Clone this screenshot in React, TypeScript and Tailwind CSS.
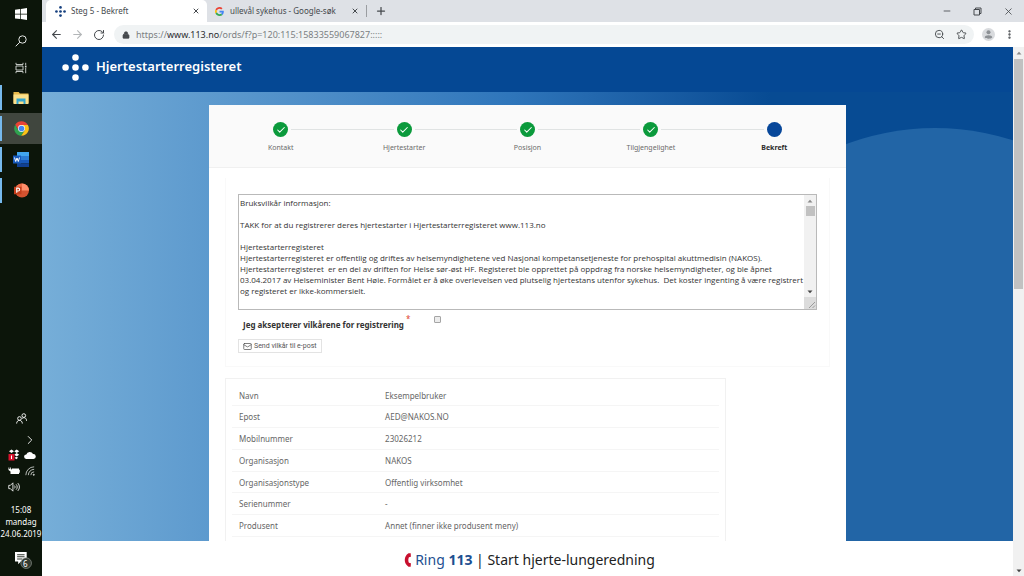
import { useState } from "react";
import type { ReactNode } from "react";
import {
  ArrowLeft,
  ArrowRight,
  Check,
  ChevronRight,
  Lock,
  Mail,
  Minus,
  MoreVertical,
  Plus,
  RotateCw,
  Star,
  X,
  ZoomOut,
} from "lucide-react";

const steps = [
  { label: "Kontakt", done: true },
  { label: "Hjertestarter", done: true },
  { label: "Posisjon", done: true },
  { label: "Tilgjengelighet", done: true },
  { label: "Bekreft", done: false },
];

const details = [
  { label: "Navn", value: "Eksempelbruker" },
  { label: "Epost", value: "AED@NAKOS.NO" },
  { label: "Mobilnummer", value: "23026212" },
  { label: "Organisasjon", value: "NAKOS" },
  { label: "Organisasjonstype", value: "Offentlig virksomhet" },
  { label: "Serienummer", value: "-" },
  { label: "Produsent", value: "Annet (finner ikke produsent meny)" },
];

const terms = `Bruksvilkår informasjon:

TAKK for at du registrerer deres hjertestarter i Hjertestarterregisteret www.113.no

Hjertestarterregisteret
Hjertestarterregisteret er offentlig og driftes av helsemyndighetene ved Nasjonal kompetansetjeneste for prehospital akuttmedisin (NAKOS).
Hjertestarterregisteret  er en del av driften for Helse sør-øst HF. Registeret ble opprettet på oppdrag fra norske helsemyndigheter, og ble åpnet
03.04.2017 av Helseminister Bent Høie. Formålet er å øke overlevelsen ved plutselig hjertestans utenfor sykehus.  Det koster ingenting å være registrert
og registeret er ikke-kommersielt.`;

function DotsLogo({ className, color }: { className: string; color: string }) {
  return (
    <svg viewBox="0 0 28 28" className={className} fill={color}>
      <circle cx="14" cy="3.7" r="3.4" />
      <circle cx="3.7" cy="14" r="3.4" />
      <circle cx="14" cy="14" r="3.4" />
      <circle cx="24.3" cy="14" r="3.4" />
      <circle cx="14" cy="24.3" r="3.4" />
    </svg>
  );
}

function GoogleLogo() {
  return (
    <svg viewBox="0 0 48 48" className="size-[9px] shrink-0">
      <path fill="#ea4335" d="M24 9.500c3.500 0 6.700 1.200 9.200 3.600l6.900-6.900C35.900 2.400 30.500 0 24 0 14.600 0 6.500 5.400 2.600 13.200l8 6.200C12.400 13.700 17.700 9.500 24 9.500z" />
      <path fill="#4285f4" d="M47 24.500c0-1.600-.2-3.100-.4-4.500H24v9h12.900c-.6 3-2.300 5.500-4.800 7.200l7.700 6C44.400 38 47 31.800 47 24.500z" />
      <path fill="#fbbc05" d="M10.500 28.600c-.5-1.500-.8-3-.8-4.600s.3-3.100.8-4.600l-8-6.200C.9 16.500 0 20.100 0 24s.9 7.500 2.600 10.800z" />
      <path fill="#34a853" d="M24 48c6.500 0 11.900-2.100 15.900-5.800l-7.700-6c-2.200 1.500-4.900 2.300-8.200 2.300-6.300 0-11.600-4.200-13.500-9.900l-8 6.200C6.500 42.600 14.600 48 24 48z" />
    </svg>
  );
}

function TaskButton({ label, active, children }: { label: string; active?: boolean; children: ReactNode }) {
  return (
    <button
      aria-label={label}
      className={`flex h-[31px] w-full items-center ${active ? "bg-[#40463e]" : ""}`}
    >
      <span className="h-[25px] w-[2px] bg-[#76b9ed]" />
      <span className="flex flex-1 justify-center pr-[2px]">{children}</span>
    </button>
  );
}

function Taskbar() {
  return (
    <aside className="flex w-[42px] shrink-0 flex-col bg-[#0c150a] pb-px text-white">
      <button aria-label="Start" className="flex h-[27px] items-center justify-center">
        <svg viewBox="0 0 12 12" className="size-[12px]" fill="#fff">
          <path d="M0 1.700 5.200 1v4.700H0zM5.900.9 12 0v5.700H5.900zM0 6.400h5.200v4.700L0 10.400zM5.900 6.400H12V12l-6.100-.9z" />
        </svg>
      </button>
      <button aria-label="Søk" className="flex h-[27px] items-center justify-center">
        <svg viewBox="0 0 12 12" className="size-[12px]" fill="none" stroke="#e5e7e5">
          <circle cx="7.500" cy="4.500" r="3.700" />
          <path d="M4.800 7.200.7 11.300" />
        </svg>
      </button>
      <button aria-label="Oppgavevisning" className="flex h-[27px] items-center justify-center">
        <svg viewBox="0 0 12 12" className="size-[12px]" fill="none" stroke="#d5d8d5" strokeWidth=".9">
          <path d="M1 .8v1.700h7V.8M1 11.200V9.500h7v1.700M1 4h7v4H1zM10.700.8v2.500M10.700 6v5.200" />
          <path d="M10.700 3.700v1.800" strokeWidth="1.600" />
        </svg>
      </button>
      <div className="mt-px">
        <TaskButton label="Filutforsker">
          <svg viewBox="0 0 16 14" className="h-[14px] w-[16px]">
            <path fill="#e9b94b" d="M.5 1h5.200l1.200 1.500h8.600V12H.5z" />
            <path fill="#fbe08c" d="M.5 3.500h15V13H.5z" />
            <path fill="#35a6cf" d="M3.500 7.500h9V13H10.500v-2.500h-5V13h-2z" />
          </svg>
        </TaskButton>
        <TaskButton label="Google Chrome" active>
          <svg viewBox="0 0 16 16" className="size-[15px]">
            <path fill="#e94335" d="M1.300 4A7.800 7.800 0 0 1 14.800 4.200H8L4.700 10z" />
            <path fill="#2fa24f" d="M1.300 4A7.800 7.800 0 0 0 7.700 15.800L11.300 10H4.700z" />
            <path fill="#fbc116" d="M14.800 4.200A7.800 7.800 0 0 1 7.700 15.800L11.400 10 8 4.200z" />
            <circle cx="8" cy="8" r="3.700" fill="#fff" />
            <circle cx="8" cy="8" r="3" fill="#4587f0" />
          </svg>
        </TaskButton>
        <TaskButton label="Word">
          <svg viewBox="0 0 16 15" className="h-[15px] w-[16px]">
            <path fill="#41a5ee" d="M4 0h12v4H4z" />
            <path fill="#2b7cd3" d="M4 4h12v4H4z" />
            <path fill="#185abd" d="M4 8h12v3.500H4z" />
            <path fill="#103f91" d="M4 11.500h12V15H4z" />
            <path fill="#185abd" d="M0 3.500h8v8H0z" />
            <path stroke="#fff" fill="none" d="m1.500 5.500 1.200 4L4 6l1.300 3.500 1.200-4" />
          </svg>
        </TaskButton>
        <TaskButton label="PowerPoint">
          <svg viewBox="0 0 16 16" className="size-[15px]">
            <circle cx="8.500" cy="8" r="7.500" fill="#d35230" />
            <path fill="#ff8f6b" d="M8.500.5A7.500 7.500 0 0 1 16 8H8.500z" />
            <path fill="#ed6c47" d="M8.500.5A7.500 7.500 0 0 0 1 8h7.500z" />
            <path fill="#c43e1c" d="M0 4h8v8H0z" />
            <path stroke="#fff" fill="none" strokeWidth="1.200" d="M2.900 10.500v-5h1.600a1.500 1.500 0 0 1 0 3H2.900" />
          </svg>
        </TaskButton>
      </div>

      {/* TRAY */}
      <div className="mt-auto flex flex-col">
        <button aria-label="Personer" className="flex h-[30px] items-center justify-center">
          <svg viewBox="0 0 12 12" className="size-[11px]" fill="none" stroke="#fff">
            <circle cx="8.500" cy="2.800" r="2" />
            <circle cx="3.800" cy="6" r="2" />
            <path d="M.7 11.500c0-4.600 6.200-4.600 6.200 0M6.500 6.200c1.800-2 5-1.200 5 2.300" />
          </svg>
        </button>
        <button aria-label="Vis skjulte ikoner" className="flex h-[14px] items-center justify-end pr-[5px]">
          <ChevronRight size={14} strokeWidth={1.5} />
        </button>
        <div className="grid grid-cols-2 justify-items-center pr-1 pl-[6px]">
          <span className="flex h-4 items-center">
            <svg viewBox="0 0 12 12" className="size-[12px]">
              <path fill="#fff" d="m3.500.5 2.500 1.700L3.500 4 1 2.200zM8.700.5l2.500 1.700L8.700 4 6.200 2.200zM8.700 4l2.500 1.800-2.500 1.700-2.500-1.700zM6.500 8.500l2.200-.5 1.500.8-2 1.400z" />
              <path fill="#d8112b" d="M.5 5h6v6.500h-6z" />
              <path stroke="#fff" d="M3.500 6.500V10" />
            </svg>
          </span>
          <span className="flex h-4 items-center">
            <svg viewBox="0 0 12 8" className="h-[8px] w-[12px]" fill="#fff">
              <path d="M2.500 8a2.300 2.300 0 0 1-.2-4.600A3.600 3.600 0 0 1 9 3a2.500 2.500 0 0 1 .5 5z" />
            </svg>
          </span>
          <span className="flex h-4 items-center">
            <svg viewBox="0 0 12 8" className="h-[8px] w-[12px]" fill="#fff">
              <path d="M4 1.500h7v1.200h.8v3H11V7H2.500V4.500L.5 3V.5h.8V2h.9V.5H3V3z" />
            </svg>
          </span>
          <span className="flex h-4 items-center">
            <svg viewBox="0 0 12 12" className="size-[10px]" fill="none" stroke="#d4d7d4">
              <path d="M1 11A10 10 0 0 1 11 1M4 11a7 7 0 0 1 7-7M7 11a4 4 0 0 1 4-4" />
              <circle cx="10.500" cy="10.500" r=".7" fill="#fff" />
            </svg>
          </span>
          <span className="flex h-4 items-center">
            <svg viewBox="0 0 14 12" className="h-[10px] w-[12px]" fill="none" stroke="#fff">
              <path d="M.7 4h2l3-3v10l-3-3h-2zM7.500 4.300c1 1 1 2.400 0 3.400M9.500 2.800c1.800 1.900 1.800 4.500 0 6.400M11.500 1.300c2.600 2.800 2.600 6.600 0 9.400" />
            </svg>
          </span>
        </div>
        <div className="mt-[9px] text-center text-[8px] leading-[12px]">
          <p>15:08</p>
          <p>mandag</p>
          <p>24.06.2019</p>
        </div>
        <button aria-label="Varslinger, 6 nye" className="mt-[5px] flex h-[30px] items-center justify-center pl-[4px]">
          <span className="relative">
            <svg viewBox="0 0 16 16" className="size-[17px]">
              <path fill="#fff" d="M0 0h11v9H5.500L3 11.500V9H0z" />
              <path stroke="#333a31" d="M2 2.500h7M2 4.500h7M2 6.500h5" />
              <circle cx="10.500" cy="10.500" r="5" fill="#333a31" stroke="#9aa09a" strokeWidth=".6" />
            </svg>
            <span className="absolute right-[4px] bottom-[1px] text-[8px] leading-[9px]">6</span>
          </span>
        </button>
      </div>
    </aside>
  );
}

function BrowserBar() {
  return (
    <div className="shrink-0 text-[#45494d]">
      {/* TABS */}
      <div className="flex h-[22px] items-center bg-[#dee1e6] pl-1 text-[8px]">
        <div className="flex h-full w-[161px] items-center rounded-t-[5px] bg-white pr-[7px] pl-[9px]">
          <DotsLogo className="mr-[5px] size-[11px]" color="#16407f" />
          <span className="flex-1">Steg 5 - Bekreft</span>
          <button aria-label="Lukk Steg 5 - Bekreft">
            <X size={8} strokeWidth={3} />
          </button>
        </div>
        <div className="flex h-full w-[159px] items-center pr-[7px] pl-[8px]">
          <GoogleLogo />
          <span className="ml-[6px] flex-1">ullevål sykehus - Google-søk</span>
          <button aria-label="Lukk ullevål sykehus - Google-søk">
            <X size={8} strokeWidth={3} />
          </button>
        </div>
        <span className="h-3 w-px bg-[#9a9da1]" />
        <button aria-label="Ny fane" className="ml-2">
          <Plus size={12} strokeWidth={2.5} />
        </button>
        <div className="ml-auto flex items-center gap-[21px] pr-[10px]">
          <button aria-label="Minimer">
            <Minus size={10} />
          </button>
          <button aria-label="Gjenopprett">
            <svg viewBox="0 0 9 9" className="size-[9px]" fill="none" stroke="currentColor">
              <path d="M1 2.500h5.500V8H1zM2.500 2.500V1H8v5.500H6.500" />
            </svg>
          </button>
          <button aria-label="Lukk vindu">
            <X size={11} strokeWidth={1.8} />
          </button>
        </div>
      </div>

      {/* ADDRESS */}
      <div className="flex h-[25px] items-center bg-white pr-[9px] pl-2">
        <button aria-label="Tilbake">
          <ArrowLeft size={13} />
        </button>
        <button aria-label="Frem" className="ml-2 text-[#b3b6b8]">
          <ArrowRight size={13} />
        </button>
        <button aria-label="Last inn på nytt" className="ml-[9px]">
          <RotateCw size={12} />
        </button>
        <div className="ml-[9px] flex h-[19px] flex-1 items-center rounded-full bg-[#f0f3f4] pr-[7px] pl-[8px]">
          <Lock size={8} fill="currentColor" className="shrink-0" />
          <div className="relative ml-[6px] flex-1 text-[9px] text-[#7b7f83]">
            <p aria-hidden="true">
              https://<span className="text-[#2a2d30]">www.113.no</span>/ords/f?p=120:115:15833559067827:::::
            </p>
            {/* the paragraph above does the two-tone colouring */}
            <input
              aria-label="Adresse"
              defaultValue="https://www.113.no/ords/f?p=120:115:15833559067827:::::"
              className="absolute inset-0 w-full bg-transparent text-transparent outline-none"
            />
          </div>
          <button aria-label="Zoom">
            <ZoomOut size={11} />
          </button>
          <button aria-label="Bokmerk" className="ml-[11px]">
            <Star size={11} />
          </button>
        </div>
        <button aria-label="Profil" className="ml-2">
          <svg viewBox="0 0 13 13" className="size-[13px]">
            <circle cx="6.500" cy="6.500" r="6.500" fill="#d9dbde" />
            <circle cx="6.500" cy="4.300" r="2" fill="#8d9195" />
            <path fill="#8d9195" d="M2.700 9.500c0-3 7.600-3 7.600 0-1.800 1.600-5.800 1.600-7.600 0z" />
          </svg>
        </button>
        <button aria-label="Meny" className="ml-[9px]">
          <MoreVertical size={11} strokeWidth={3} />
        </button>
      </div>
    </div>
  );
}

function Stepper() {
  return (
    <ol className="flex border-b border-[#f0f0f0] bg-[#fafafa] px-[10px] pt-[17px] pb-[14px]">
      {steps.map((step, i) => (
        <li key={step.label} className="flex flex-1 flex-col items-center">
          <div className="flex w-full items-center gap-[3px]">
            <span className={`h-px flex-1 ${i > 0 ? "bg-[#e0e3e3]" : ""}`} />
            <span
              className={`flex size-[15px] items-center justify-center rounded-full text-white ${step.done ? "bg-[#0b9a3c]" : "bg-[#07479a]"}`}
            >
              {step.done && <Check size={10} strokeWidth={2.5} />}
            </span>
            <span className={`h-px flex-1 ${i < steps.length - 1 ? "bg-[#e0e3e3]" : ""}`} />
          </div>
          <span className={`mt-[6px] text-[7px] leading-[10px] ${step.done ? "text-[#6b6b6b]" : "font-bold text-[#2b2b2b]"}`}>
            {step.label}
          </span>
        </li>
      ))}
    </ol>
  );
}

function Arrow({ up, color }: { up?: boolean; color: string }) {
  return (
    <svg viewBox="0 0 6 4" className="h-[4px] w-[6px]" fill={color}>
      <path d={up ? "M.5 3.500 3 .8l2.500 2.700z" : "M.5.5 3 3.200 5.500.5z"} />
    </svg>
  );
}

function Terms() {
  const [accepted, setAccepted] = useState(false);

  return (
    <section className="mx-4 mt-[10px] border-x border-b border-[#f9f9f9] px-3 pt-4 pb-[13px]">
      <div className="flex h-[116px] border border-[#b9b9b9] bg-white">
        <textarea
          aria-label="Bruksvilkår"
          readOnly
          wrap="off"
          value={terms}
          className="min-w-0 flex-1 resize-none overflow-hidden pt-[2px] pl-px font-['Open_Sans',sans-serif] text-[8px] leading-[11px] text-[#333] outline-none"
        />
        <div className="flex w-[12px] flex-col items-center bg-[#f1f1f1]">
          <span className="flex h-[11px] items-center">
            <Arrow up color="#8a8a8a" />
          </span>
          <span className="h-[10px] w-[9px] bg-[#c1c1c1]" />
          <span className="mt-auto flex h-[11px] items-center">
            <Arrow color="#444" />
          </span>
          <span className="flex h-[12px] w-full items-end justify-end bg-[#dcdcdc]">
            <svg viewBox="0 0 8 8" className="size-[8px]" stroke="#8a8a8a" strokeWidth=".8">
              <path d="M1 7 7 1M4.500 7 7 4.500" />
            </svg>
          </span>
        </div>
      </div>
      <div className="flex h-[29px] items-start pl-[5px]">
        <label htmlFor="accept" className="pt-[9px] text-[8px] leading-[12px] font-bold text-[#333]">
          Jeg aksepterer vilkårene for registrering
        </label>
        <span className="mt-[3px] ml-[2px] text-[8px] leading-[12px] text-[#e0452f]">*</span>
        <input
          id="accept"
          type="checkbox"
          checked={accepted}
          onChange={(e) => setAccepted(e.target.checked)}
          className="mt-[6px] ml-6 size-[7px] appearance-none rounded-[1px] border border-[#a5a5a5] bg-[#ececec] checked:bg-[#07479a]"
        />
      </div>
      <button className="flex h-[14px] items-center gap-[2px] border border-[#e3e3e3] px-1 font-['Roboto',sans-serif] text-[7px] text-[#555]">
        <Mail size={9} />
        Send vilkår til e-post
      </button>
    </section>
  );
}

function Details() {
  return (
    <section className="mt-[11px] mr-[120px] ml-4 border border-[#f1f1f1] px-[6px] pt-[6px] pb-4">
      <table className="h-[152px] w-full text-[8px] leading-[11px] text-[#666]">
        <tbody>
          {details.map((row) => (
            <tr key={row.label} className="border-b border-[#f5f5f5]">
              <th className="w-[30%] pl-[7px] text-left font-normal">{row.label}</th>
              <td className="pl-[7px]">{row.value}</td>
            </tr>
          ))}
        </tbody>
      </table>
    </section>
  );
}

export default function App() {
  return (
    <div className="flex h-screen overflow-hidden font-['Noto_Sans','Open_Sans',sans-serif]">
      <Taskbar />
      <div className="flex min-w-0 flex-1 flex-col">
        <BrowserBar />
        <div className="flex min-h-0 flex-1">
          <div className="flex min-w-0 flex-1 flex-col">
            <header className="flex h-[45px] shrink-0 items-center gap-[7px] bg-[#054894] pb-1 pl-5 text-white">
              <DotsLogo className="size-[27px]" color="#fff" />
              <h1 className="pb-[3px] text-[13px] leading-[18px] font-semibold">Hjertestarterregisteret</h1>
            </header>

            <main className="relative flex min-h-0 flex-1 justify-center overflow-hidden bg-linear-to-r from-[#76aed8] via-[#2f76bb] via-48% to-[#074b93] to-75% pt-[13px]">
              <div className="absolute top-[36px] right-[-177px] size-[510px] rounded-full bg-[#2265a6]" />
              <div className="relative h-[600px] w-full max-w-[637px] rounded-t-[2px] bg-white">
                <Stepper />
                <Terms />
                <Details />
              </div>
            </main>

            <footer className="flex h-[35px] shrink-0 items-center justify-center gap-1 bg-white pt-[2px] pl-1 text-[14px] text-[#222]">
              <svg viewBox="0 0 7 14" className="h-[14px] w-[7px]" fill="#c8102e">
                <path d="M4.500.3 6.700.2l.2 3.500-2 .5c-.8 1.900-.8 3.700 0 5.600l2 .5-.2 3.500-2.200-.1C-.5 10.500-.5 3.500 4.500.3z" />
              </svg>
              <p>
                <a href="tel:113" className="text-[#1d4f91]">
                  Ring <b>113</b>
                </a>{" "}
                | Start hjerte-lungeredning
              </p>
            </footer>
          </div>

          {/* PAGE SCROLLBAR */}
          <div className="flex w-[11px] shrink-0 flex-col items-center bg-[#f1f1f1]">
            <span className="flex h-[12px] items-center">
              <Arrow up color="#8a8a8a" />
            </span>
            <span className="h-[230px] w-[9px] bg-[#c1c1c1]" />
            <span className="mt-auto flex h-[10px] items-center">
              <Arrow color="#444" />
            </span>
          </div>
        </div>
      </div>
    </div>
  );
}
